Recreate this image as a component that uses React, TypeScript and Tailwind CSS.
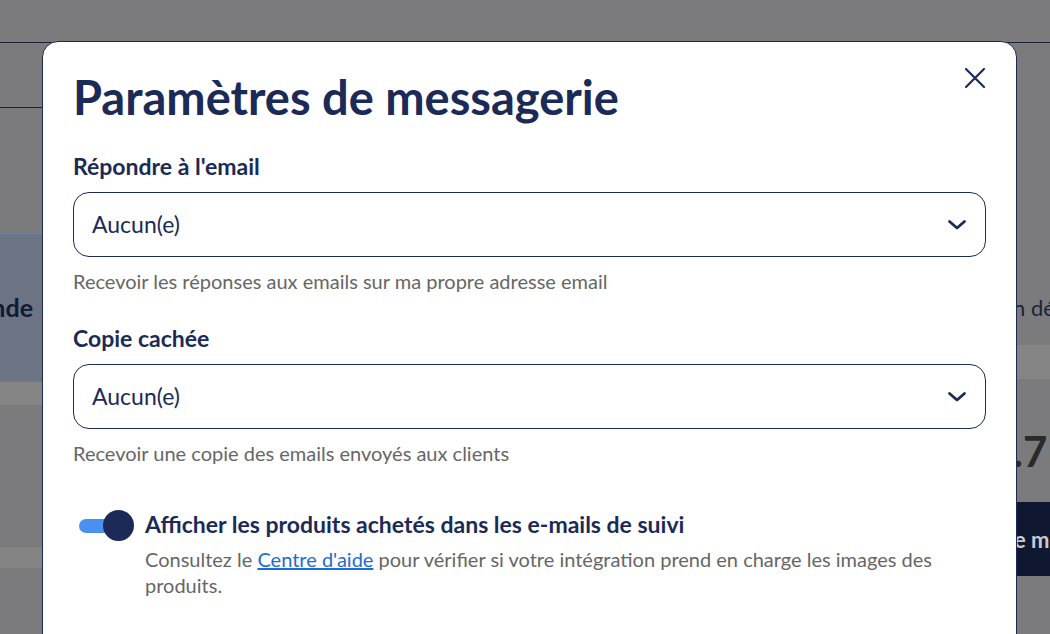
import React from "react";

const navy = "text-[#1b2a57]";

function Chevron() {
  return (
    <svg width="20" height="20" viewBox="0 0 20 20" fill="none" className="text-[#1b2a57]">
      <path d="M2.5 6.5 L10 13 L17.5 6.5" stroke="currentColor" strokeWidth="2.8" strokeLinecap="round" strokeLinejoin="round" />
    </svg>
  );
}

function Select({ value }: { value: string }) {
  return (
    <div className="flex h-[65px] items-center justify-between rounded-[16px] border border-[#1b2a57] pl-[18px] pr-[18px]">
      <span className={`text-[23px] ${navy}`}>{value}</span>
      <Chevron />
    </div>
  );
}

export default function App() {
  return (
    <div
      className="relative h-[634px] w-[1050px] overflow-hidden bg-[#7b7b7d]"
      style={{ fontFamily: "Lato, 'Noto Sans', sans-serif" }}
    >
      {/* background page (dimmed) */}
      <div className="flex h-full flex-col">
        <div className="h-[43px] border-b border-[#1b2433]" />
        <div className="flex flex-1">
          <div className="flex w-[42px] flex-col">
            <div className="h-[65px] border-b border-[#1b2433]" />
            <div className="h-[126px]" />
            <div className="flex h-[148px] items-center justify-end overflow-hidden border-y border-[#5d7aa6] bg-[#6c7383] pr-[9px]">
              <span className="whitespace-nowrap text-[25px] font-bold text-[#0f1a33]">nde</span>
            </div>
            <div className="h-[23px] bg-[#858585]" />
            <div className="h-[142px]" />
            <div className="h-[21px] bg-[#848484]" />
          </div>
          <div className="flex-1" />
          <div className="flex w-[33px] flex-col overflow-hidden">
            <div className="h-[250px]" />
            <div className="-ml-[4px] h-[30px] whitespace-nowrap text-[22px] leading-[30px] text-[#1a2436]">n dé</div>
            <div className="h-[22px]" />
            <div className="h-[34px] bg-[#858585]" />
            <div className="h-[56px]" />
            <div className="-ml-[4px] h-[32px] whitespace-nowrap text-[42px] font-bold leading-[32px] text-[#2a2a2a]">.7</div>
            <div className="h-[35px]" />
            <div className="-ml-[3px] flex h-[74px] items-center whitespace-nowrap bg-[#0f1830] text-[22px] font-bold text-[#c8cad2]">
              e mo
            </div>
          </div>
        </div>
      </div>

      {/* modal */}
      <div className="absolute left-[42px] top-[41px] h-[640px] w-[975px] rounded-[16px] border border-[#1b2a57] bg-white">
        <button className="absolute right-[29px] top-[24px] text-[#1b2a57]" aria-label="Fermer">
          <svg width="24" height="24" viewBox="0 0 24 24" fill="none">
            <path d="M3 3 L21 21 M21 3 L3 21" stroke="currentColor" strokeWidth="2.2" strokeLinecap="round" />
          </svg>
        </button>
        <div className="flex flex-col pl-[30px] pr-[30px] pt-[27px]">
          <h1 className={`text-[47px] font-bold leading-[56px] ${navy}`}>Paramètres de messagerie</h1>

          <div className={`mt-[27px] text-[23px] font-bold leading-[28px] ${navy}`}>Répondre à l'email</div>
          <div className="mt-[12px]">
            <Select value="Aucun(e)" />
          </div>
          <div className="mt-[12px] text-[20px] leading-[24px] text-[#666666]">
            Recevoir les réponses aux emails sur ma propre adresse email
          </div>

          <div className={`mt-[31px] text-[23px] font-bold leading-[28px] ${navy}`}>Copie cachée</div>
          <div className="mt-[12px]">
            <Select value="Aucun(e)" />
          </div>
          <div className="mt-[12px] text-[20px] leading-[24px] text-[#666666]">
            Recevoir une copie des emails envoyés aux clients
          </div>

          <div className="mt-[45px] flex items-start gap-[11px]">
            <div className="relative h-[31px] w-[61px] shrink-0">
              <div className="absolute left-[6px] top-[9px] h-[14px] w-[38px] rounded-full bg-[#4a90f0]" />
              <div className="absolute left-[30px] top-0 h-[31px] w-[31px] rounded-full bg-[#1b2a57]" />
            </div>
            <div className="flex flex-col">
              <div className={`text-[23px] font-bold leading-[28px] ${navy}`}>
                Afficher les produits achetés dans les e-mails de suivi
              </div>
              <p className="mt-[8px] text-[20px] leading-[26px] text-[#666666]">
                Consultez le <a href="#" className="text-[#1a6dd6] underline">Centre d'aide</a> pour vérifier si votre intégration prend en charge les images des produits.
              </p>
            </div>
          </div>
        </div>
      </div>
    </div>
  );
}
